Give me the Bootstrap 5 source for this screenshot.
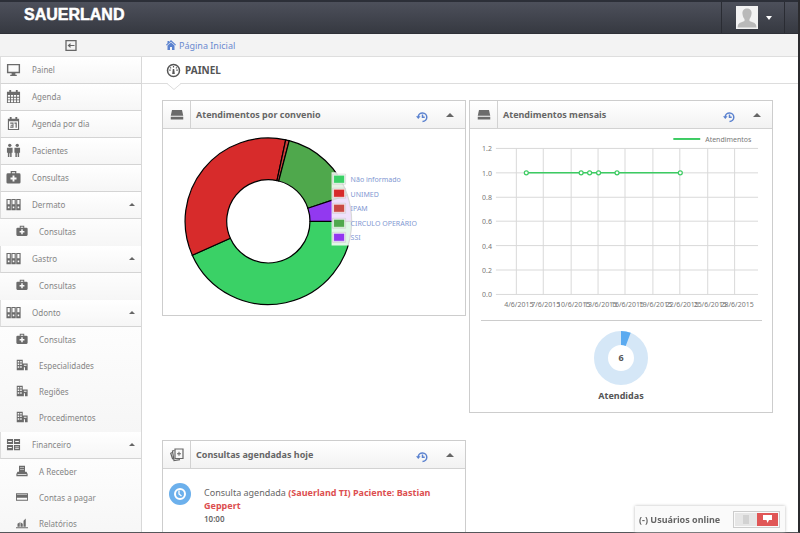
<!DOCTYPE html>
<html lang="pt-BR">
<head>
<meta charset="utf-8">
<meta name="viewport" content="width=device-width, initial-scale=1">
<title>Sauerland - Painel</title>
<link rel="stylesheet" href="https://cdn.jsdelivr.net/npm/bootstrap@5.3.0/dist/css/bootstrap.min.css">
<style>
body{font-family:"Noto Sans","Open Sans",sans-serif;font-size:9px;line-height:13px;color:#666;background:#fff}
a{text-decoration:none}
svg{display:block}
button{font:inherit;color:inherit;background:none;border:0;padding:0}
.shell{border-right:2px solid #2b2b2e;border-bottom:1px solid #55565a}
.topbar{height:34px;background:linear-gradient(#4d505b,#363941);border-top:2px solid #2c2f38;border-bottom:1px solid #2e3037}
.logo{font:bold 16px/26px "Liberation Sans",sans-serif;color:#fff;padding-left:24px;-webkit-text-stroke:.5px #fff}
.user-btn{width:64px;border-left:1px solid #2a2c33;border-right:1px solid #2a2c33;margin-right:13px;padding-left:2px}
.avatar{width:22px;height:23px}
.crumbs{height:23px;background:#f3f3f3;border-bottom:1px solid #dedede}
.side-w{width:142px;flex:none}
.crumbs a{color:#6a8ad0}
.crumbs a svg{margin-right:3px}
.sidebar{background:#fafafa;border-right:1px solid #d8d8d8}
.sidebar a{display:flex;align-items:center;color:#858585;font-size:8px}
.sidebar .top-item{height:27px;padding:0 6px 2px 5px;border-bottom:1px solid #d4d4d4;border-left:1px solid #ddd;background:linear-gradient(#fff,#f6f6f6)}
.top-item svg{width:15px;height:15px;margin-right:11px}
.sub-list{padding-bottom:1px;background:linear-gradient(#fdfdfd,#f6f6f6)}
.sub-list a{height:26px;padding:0 0 2px 16px}
.sub-list svg{width:12px;height:12px;margin-right:11px}
.glyph{fill:#6b6b6b;color:#6b6b6b}
.up{width:0;height:0;border:4px solid transparent;border-top:0;border-bottom:4px solid #666}
.down{width:0;height:0;border:3px solid transparent;border-bottom:0;border-top:4px solid #fff}
.sidebar .up{border-width:0 3px 3px}
.title-bar{height:27px;border-bottom:1px solid #ddd;padding-left:24px;position:relative}
.title-bar h1{font-size:10px;line-height:13px;font-weight:700;color:#555}
.notch{position:absolute;left:25px;top:25px}
.content{padding:16px 25px 0 20px}
.tiles{--bs-gutter-x:3px}
.panel{border:1px solid #cdcdcd;border-radius:0;background:#fff;color:#666}
.panel-top{height:28px;border-bottom:1px solid #d2d2d2;background:linear-gradient(#fff,#f2f2f2)}
.panel-icon{width:28px;border-right:1px solid #d2d2d2}
.panel-top h2{font-size:9px;line-height:13px;font-weight:700;color:#666;padding-left:5px}
.reload{margin-right:18px;padding-top:5px}
.toggle{margin-right:11px}
.plot text{font-size:7px;fill:#777}
.plot .key{fill:#8298d2}
.rule{margin:6px 10px 0 11px;border-top:1px solid #ccc}
.dial{padding:10px 0;font-weight:700;color:#555}
.second{margin-top:27px}
.event{padding:13px 20px 14px 5px}
.event strong{color:#dc4f50}
.event p{font-size:9px}
.event time{font-size:8px}
.online{position:fixed;right:15px;bottom:1px;width:150px;height:26px;background:#fafafa;box-shadow:0 0 3px #bbb;padding:0 5px 0 4px;font-weight:700;color:#666}
.switch-box{border:1px solid #ccc;height:17px;width:47px;padding:1px}
.switch-box .on{background:#e05656;width:21px}
.switch-box .off{background:#e6e6e6;width:22px}
</style>
<script src="https://cdn.jsdelivr.net/npm/bootstrap@5.3.0/dist/js/bootstrap.bundle.min.js"></script>
</head>
<body>
<svg width="0" height="0" class="position-absolute" aria-hidden="true">
<defs>
<symbol id="i-monitor" viewBox="0 0 16 16"><path fill-rule="evenodd" d="M1 2h14v10H1zM2.500 3.500v7h11v-7zM6 12h4v1.500h1.500V15h-7v-1.500H6z"/></symbol>
<symbol id="i-cal" viewBox="0 0 16 16"><path fill-rule="evenodd" d="M1 3h2.500V1h2v2h5V1h2v2H15v12H1zM2 6.500v1.800h2.300V6.500zm3.300 0v1.800h2.300V6.500zm3.200 0v1.800h2.300V6.500zm3.300 0v1.800H14V6.500zM2 9.300v1.800h2.300V9.300zm3.300 0v1.800h2.300V9.300zm3.200 0v1.800h2.300V9.300zm3.300 0v1.800H14V9.300zM2 12.100V14h2.300v-1.900zm3.300 0V14h2.300v-1.900zm3.200 0V14h2.300v-1.900zm3.300 0V14H14v-1.900z"/></symbol>
<symbol id="i-day" viewBox="0 0 16 16"><path fill-rule="evenodd" d="M2 3h2V1h2v2h4V1h2v2h2v12H2zM3.200 5.500v8.300h9.600V5.500zM4.500 7H8v5.500H4.500v-1.200H7V10.300H5V9.200h2v-1H4.500zM9 7h2.500v5.500h-1.300V8.200H9z"/></symbol>
<symbol id="i-people" viewBox="0 0 16 16"><circle cx="4" cy="2.500" r="1.800"/><circle cx="12" cy="2.500" r="1.800"/><path d="M1 5h6v5.500H6V15H4.400v-4h-.8v4H2v-4.500H1zM9 5h6v5.500h-1V15h-1.600v-4h-.8v4H10v-4.500H9z"/></symbol>
<symbol id="i-kit" viewBox="0 0 16 16"><path fill-rule="evenodd" d="M5 3.500V1h6v2.500h3q1.500 0 1.500 1.500v8q0 1.500-1.500 1.500H2Q.5 14.500 .5 13V5Q.5 3.500 2 3.500zM6.300 3.500h3.400V2.300H6.300zM7 5.800v2.200H4.800v2H7v2.200h2V10h2.200V8H9V5.800z"/></symbol>
<symbol id="i-binders" viewBox="0 0 16 16"><path fill-rule="evenodd" d="M.5 2h4.700v12H.5zM5.700 2h4.700v12H5.700zM10.900 2h4.700v12h-4.700zM1.700 3.300v4.400H4V3.300zm5.200 0v4.400h2.300V3.300zm5.200 0v4.400h2.300V3.300zM2 10v2h1.700v-2zm5.200 0v2h1.700v-2zm5.200 0v2h1.700v-2z"/></symbol>
<symbol id="i-build" viewBox="0 0 16 16"><path fill-rule="evenodd" d="M1 1h8v5h6.500v9H12v-4h-1.500v4H1zM2.300 2.500v2h2v-2zm3.300 0v2h2v-2zM2.300 6v2h2V6zm3.300 0v2h2V6zM2.300 9.500v2h2v-2zm3.300 0v2h2v-2zM10.500 7.500V9H14V7.500z"/></symbol>
<symbol id="i-fin" viewBox="0 0 16 16"><path fill-rule="evenodd" d="M1 2h6.500v5.500H1zM8.500 2H15v5.500H8.500zM1 8.500h6.500V14H1zM8.500 8.500H15V14H8.500zM2.300 4.200v1h3.900v-1zm7.500 0v1h3.900v-1zM2.300 10.700v1h3.900v-1zm7.500-.6v.9h3.900v-.9zm0 1.700v.8h3.900v-.8z"/></symbol>
<symbol id="i-register" viewBox="0 0 16 16"><path fill-rule="evenodd" d="M4 1h8v8h2l1.500 3v3H.5v-3L2 9h2zM5.300 3v.7h5.400V3zm0 2.400v.7h5.400v-.7zM2 12.400v.8h12v-.8z"/></symbol>
<symbol id="i-card" viewBox="0 0 16 16"><path fill-rule="evenodd" d="M0 3h16v10H0zM1.200 4.200v.8h13.600V4.200zM1.200 9v2.800h13.600V9z"/></symbol>
<symbol id="i-chart" viewBox="0 0 16 16"><path d="M0 13.500h16V15H0zM2 9l3-2v6H2zM6 7l3 2v4H6zM10 5l3-3v11h-3z"/></symbol>
<symbol id="i-drive" viewBox="0 0 16 12"><path d="M2 0h12L15.500 7H.5zM.5 8h15v3.500H.5z"/></symbol>
<symbol id="i-history" viewBox="0 0 12 12"><path fill="none" stroke="#5b82cf" stroke-width="1.500" d="M2.200 6a4.300 4.300 0 1 1 4.300 4.500M6.500 3.500v2.800h2.200"/><path fill="#5b82cf" d="M0 5.300h4.600L2.300 8z"/></symbol>
</defs>
</svg>

<div class="shell vh-100 overflow-hidden d-flex flex-column">
  <header class="topbar d-flex justify-content-between flex-shrink-0">
    <a class="logo" href="#">SAUERLAND</a>
    <button type="button" class="user-btn d-flex align-items-center justify-content-center gap-2" aria-label="Conta do usuário">
      <svg class="avatar" viewBox="0 0 22 23"><path fill="#f2f2f2" d="M0 0h22v23H0z"/><path fill="#b9b9b9" d="M11 2.500c3.500 0 5 2.500 4.500 5.500-.3 2.500-1.300 4-2 5v2l5 2q2 1 2 4.500h-19q0-3.500 2-4.500l5-2v-2c-1-1-1.700-2.500-2-5-.5-3 1-5.500 4.500-5.500z"/></svg>
      <span class="down"></span>
    </button>
  </header>

  <div class="crumbs d-flex align-items-center flex-shrink-0">
    <div class="side-w d-flex justify-content-center">
      <button type="button" aria-label="Recolher menu"><svg width="12" height="11" viewBox="0 0 12 11"><path fill="none" stroke="#666" stroke-width="1.300" d="M1 .7h10v9.600H1z"/><path fill="#666" d="M2.500 5.500 5.500 3v2H9.500v1H5.500v2z"/></svg></button>
    </div>
    <a href="#" class="d-flex align-items-center ps-4"><svg width="10" height="10" viewBox="0 0 10 10"><path fill="#5b82cf" d="M5 0l5 4.700-.7.800L5 1.700.7 5.500 0 4.700 1.500 3.300V1H3v1zM5 2.500l3.500 3V10H6V7H4v3H1.500V5.500z"/></svg>Página Inicial</a>
  </div>

  <div class="d-flex flex-grow-1">
    <nav class="sidebar side-w glyph" aria-label="Menu principal">
      <a class="top-item" href="#"><svg><use href="#i-monitor"/></svg>Painel</a>
      <a class="top-item" href="#"><svg><use href="#i-cal"/></svg>Agenda</a>
      <a class="top-item" href="#"><svg><use href="#i-day"/></svg>Agenda por dia</a>
      <a class="top-item" href="#"><svg><use href="#i-people"/></svg>Pacientes</a>
      <a class="top-item" href="#"><svg><use href="#i-kit"/></svg>Consultas</a>
      <a class="top-item" href="#"><svg><use href="#i-binders"/></svg>Dermato<span class="up ms-auto"></span></a>
      <div class="sub-list"><a href="#"><svg><use href="#i-kit"/></svg>Consultas</a></div>
      <a class="top-item" href="#"><svg><use href="#i-binders"/></svg>Gastro<span class="up ms-auto"></span></a>
      <div class="sub-list"><a href="#"><svg><use href="#i-kit"/></svg>Consultas</a></div>
      <a class="top-item" href="#"><svg><use href="#i-binders"/></svg>Odonto<span class="up ms-auto"></span></a>
      <div class="sub-list">
        <a href="#"><svg><use href="#i-kit"/></svg>Consultas</a>
        <a href="#"><svg><use href="#i-build"/></svg>Especialidades</a>
        <a href="#"><svg><use href="#i-build"/></svg>Regiões</a>
        <a href="#"><svg><use href="#i-build"/></svg>Procedimentos</a>
      </div>
      <a class="top-item" href="#"><svg><use href="#i-fin"/></svg>Financeiro<span class="up ms-auto"></span></a>
      <div class="sub-list">
        <a href="#"><svg><use href="#i-register"/></svg>A Receber</a>
        <a href="#"><svg><use href="#i-card"/></svg>Contas a pagar</a>
        <a href="#"><svg><use href="#i-chart"/></svg>Relatórios</a>
      </div>
    </nav>

    <main class="flex-grow-1">
      <div class="title-bar d-flex align-items-center">
        <svg class="me-1" width="15" height="15" viewBox="0 0 15 15"><circle cx="7.500" cy="7.500" r="6" fill="none" stroke="#555" stroke-width="1.500"/><path fill="#555" d="M6.800 6h1.400l.6 5H6.200zM6.900 3h1.200v1.400H6.900zM3.200 6.500h1.500v1.200H3.200zM10.300 6.500h1.500v1.200h-1.500zM4.500 4l1 .9-.8.800-.9-.9zM10.500 4l.7.800-.9.900-.8-.8z"/></svg>
        <h1 class="m-0">PAINEL</h1>
        <svg class="notch" width="14" height="8" viewBox="0 0 14 8"><path fill="#fff" stroke="#ddd" d="M0 1.500 7 7.500 14 1.500"/><path fill="#fff" d="M1 0h12v2H1z"/></svg>
      </div>

      <div class="content">
        <div class="row tiles align-items-start">
          <div class="col-6">
            <section class="card panel">
              <div class="panel-top d-flex align-items-stretch">
                <div class="panel-icon d-flex align-items-center justify-content-center"><svg class="glyph" width="14" height="10"><use href="#i-drive"/></svg></div>
                <h2 class="m-0 flex-grow-1 align-self-center">Atendimentos por convenio</h2>
                <button type="button" class="reload" aria-label="Atualizar"><svg width="12" height="12"><use href="#i-history"/></svg></button>
                <button type="button" class="toggle" aria-label="Recolher"><span class="up d-block"></span></button>
              </div>
              <svg class="plot w-100" viewBox="0 0 301 185" role="img" aria-label="Atendimentos por convenio">
                <g transform="translate(105 92)" stroke="#000" stroke-width="1.200">
                  <path fill="#3ad166" d="M83 0A83 83 0 0 1-75.800 33.800L-37.900 16.900A41.500 41.500 0 0 0 41.500 0z"/>
                  <path fill="#d72b2b" d="M-75.800 33.800A83 83 0 0 1 17.300-81.200L8.600-40.600A41.500 41.500 0 0 0-37.900 16.900z"/>
                  <path fill="#c9423c" d="M17.300-81.200A83 83 0 0 1 20.800-80.400L10.400-40.200 8.600-40.600z"/>
                  <path fill="#4fa84c" d="M20.800-80.400A83 83 0 0 1 78.800-26.100L39.400-13A41.500 41.500 0 0 0 10.400-40.200z"/>
                  <path fill="#9239f0" d="M78.800-26.100A83 83 0 0 1 83 0H41.500A41.500 41.500 0 0 0 39.400-13z"/>
                </g>
                <path fill="#fff" fill-opacity=".85" d="M168 43h94v73h-94z"/>
                <g stroke="#fff" stroke-opacity=".6">
                  <path fill="#3ad166" d="M170 46h11v8h-11z"/>
                  <path fill="#d72b2b" d="M170 60h11v8h-11z"/>
                  <path fill="#c94a45" d="M170 75h11v8h-11z"/>
                  <path fill="#4fa84c" d="M170 90h11v8h-11z"/>
                  <path fill="#9239f0" d="M170 104h11v8h-11z"/>
                </g>
                <g fill="none" stroke="#ccc" stroke-width=".6"><path d="M169 45h13v10h-13zM169 59h13v10h-13zM169 74h13v10h-13zM169 89h13v10h-13zM169 103h13v10h-13z"/></g>
                <text class="key" x="187" y="53">Não informado</text>
                <text class="key" x="187" y="68">UNIMED</text>
                <text class="key" x="187" y="82">IPAM</text>
                <text class="key" x="187" y="97">CIRCULO OPERÁRIO</text>
                <text class="key" x="187" y="111">SSI</text>
              </svg>
            </section>
          </div>
          <div class="col-6">
            <section class="card panel">
              <div class="panel-top d-flex align-items-stretch">
                <div class="panel-icon d-flex align-items-center justify-content-center"><svg class="glyph" width="14" height="10"><use href="#i-drive"/></svg></div>
                <h2 class="m-0 flex-grow-1 align-self-center">Atendimentos mensais</h2>
                <button type="button" class="reload" aria-label="Atualizar"><svg width="12" height="12"><use href="#i-history"/></svg></button>
                <button type="button" class="toggle" aria-label="Recolher"><span class="up d-block"></span></button>
              </div>
              <svg class="plot w-100" viewBox="0 0 303 186" role="img" aria-label="Atendimentos mensais">
                <path fill="none" stroke="#d9d9d9" d="M26 19.500h263M26 44h263M26 68.500h263M26 92.500h263M26 117h263M26 141.500h263M26 166h263M46.500 19.500V166M73.500 19.500V166M101.500 19.500V166M128.500 19.500V166M155.500 19.500V166M183.500 19.500V166M210.500 19.500V166M238.500 19.500V166M265.500 19.500V166"/>
                <path stroke="#3ccb62" stroke-width="1.500" d="M56.500 44H211"/>
                <path stroke="#3ccb62" stroke-width="2" d="M204 10h27"/>
                <g fill="#fff" stroke="#3ccb62" stroke-width="1.200"><circle cx="56.500" cy="44" r="2"/><circle cx="111.500" cy="44" r="2"/><circle cx="120" cy="44" r="2"/><circle cx="129" cy="44" r="2"/><circle cx="147.500" cy="44" r="2"/><circle cx="211" cy="44" r="2"/></g>
                <text x="236" y="13">Atendimentos</text>
                <g text-anchor="end"><text x="22" y="22">1.2</text><text x="22" y="47">1.0</text><text x="22" y="71">0.8</text><text x="22" y="95">0.6</text><text x="22" y="120">0.4</text><text x="22" y="144">0.2</text><text x="22" y="169">0.0</text></g>
                <g text-anchor="middle"><text x="49" y="179">4/6/2015</text><text x="76" y="179">7/6/2015</text><text x="104" y="179">10/6/2015</text><text x="131" y="179">13/6/2015</text><text x="158" y="179">16/6/2015</text><text x="186" y="179">19/6/2015</text><text x="213" y="179">22/6/2015</text><text x="241" y="179">25/6/2015</text><text x="268" y="179">28/6/2015</text></g>
              </svg>
              <div class="rule"></div>
              <div class="dial d-flex flex-column align-items-center gap-1">
                <svg width="54" height="54" viewBox="-27 -27 54 54"><circle r="20" fill="none" stroke="#d5e7f7" stroke-width="14"/><path fill="#5aaaf0" d="M0-27A27 27 0 0 1 9.700-25.200L4.700-12.100A13 13 0 0 0 0-13z"/><text y="3" text-anchor="middle" font-size="9" fill="#555">6</text></svg>
                <span>Atendidas</span>
              </div>
            </section>
          </div>
        </div>

        <div class="row tiles">
          <div class="col-6">
            <section class="card panel second">
              <div class="panel-top d-flex align-items-stretch">
                <div class="panel-icon d-flex align-items-center justify-content-center"><svg width="14" height="14" viewBox="0 0 14 14"><g fill="none" stroke="#666" stroke-width="1.200"><path d="M5 1h8v9.500H5z"/><path d="M4.500 2.500 2.500 3l1.500 9.500 6-.8M2.300 4.500l-1.600.8 2 6"/></g><path fill="#666" d="M8.500 3.800h1v1.500H11v1H9.500v1.500h-1V6.300H7v-1h1.500z"/></svg></div>
                <h2 class="m-0 flex-grow-1 align-self-center">Consultas agendadas hoje</h2>
                <button type="button" class="reload" aria-label="Atualizar"><svg width="12" height="12"><use href="#i-history"/></svg></button>
                <button type="button" class="toggle" aria-label="Recolher"><span class="up d-block"></span></button>
              </div>
              <div class="event d-flex">
                <svg class="flex-shrink-0 me-1" width="24" height="24" viewBox="0 0 24 24"><circle cx="12" cy="12" r="11" fill="#6cb0ec"/><circle cx="12" cy="12" r="5" fill="none" stroke="#fff" stroke-width="2"/><path fill="none" stroke="#fff" stroke-width="1.300" d="M11 8.500V12l2.500 2"/></svg>
                <div class="ps-1 pt-1 ms-1">
                  <p class="m-0">Consulta agendada <strong>(Sauerland TI) Paciente: Bastian Geppert</strong></p>
                  <time class="fw-semibold" datetime="10:00">10:00</time>
                </div>
              </div>
            </section>
          </div>
        </div>
      </div>
    </main>
  </div>
</div>

<aside class="online d-flex align-items-center justify-content-between">
  <span>(-) Usuários online</span>
  <button type="button" class="switch-box d-flex" aria-label="Alternar chat">
    <span class="off h-100 d-flex align-items-center justify-content-center"><svg width="8" height="9" viewBox="0 0 8 9"><path fill="#d2d2d2" d="M1 0h6v9H1z"/></svg></span>
    <span class="on h-100 d-flex align-items-center justify-content-center"><svg width="9" height="8" viewBox="0 0 9 8"><path fill="#fff" d="M0 0h9v5H6L4.500 8 3.500 5H0z"/></svg></span>
  </button>
</aside>
</body>
</html>
